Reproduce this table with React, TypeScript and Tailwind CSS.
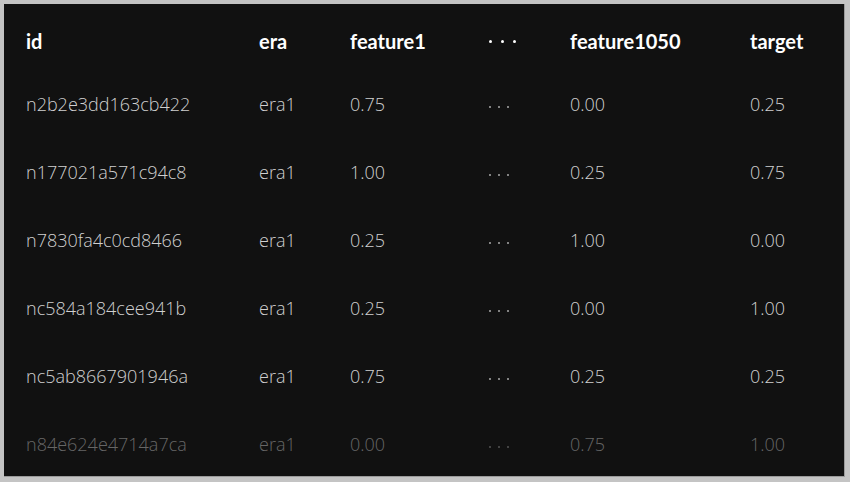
const rows = [
  { id: "n2b2e3dd163cb422", era: "era1", f1: "0.75", f1050: "0.00", target: "0.25" },
  { id: "n177021a571c94c8", era: "era1", f1: "1.00", f1050: "0.25", target: "0.75" },
  { id: "n7830fa4c0cd8466", era: "era1", f1: "0.25", f1050: "1.00", target: "0.00" },
  { id: "nc584a184cee941b", era: "era1", f1: "0.25", f1050: "0.00", target: "1.00" },
  { id: "nc5ab8667901946a", era: "era1", f1: "0.75", f1050: "0.25", target: "0.25" },
  { id: "n84e624e4714a7ca", era: "era1", f1: "0.00", f1050: "0.75", target: "1.00" },
];

const cols = "grid grid-cols-[233px_91px_138px_82px_180px_1fr] items-center";

export default function App() {
  return (
    <div className="w-[850px] h-[482px] bg-[#c4c4c4] pl-[4px] pt-[4px] pr-[5px] pb-[5px]">
      <div className="w-full h-full bg-[#111111] pl-[22px] pt-[8px] overflow-hidden border-r border-b border-[#9a9a9a]">
        {/* Header */}
        <div
          className={`${cols} h-[58px] text-white text-[20px] font-bold`}
          style={{ fontFamily: "Lato, 'Noto Sans', sans-serif" }}
        >
          <span>id</span>
          <span>era</span>
          <span>feature1</span>
          <span className="flex gap-[9px] pl-[1px]">
            <i className="w-[3px] h-[3px] bg-white rounded-full" />
            <i className="w-[3px] h-[3px] bg-white rounded-full" />
            <i className="w-[3px] h-[3px] bg-white rounded-full" />
          </span>
          <span>feature1050</span>
          <span>target</span>
        </div>

        {/* Rows */}
        {rows.map((r, i) => (
          <div
            key={r.id}
            className={`${cols} h-[68px] text-[18px] font-light ${
              i === rows.length - 1 ? "text-[#666666]" : "text-[#d0d0d0]"
            }`}
            style={{ fontFamily: "'Open Sans', 'Noto Sans', sans-serif" }}
          >
            <span>{r.id}</span>
            <span>{r.era}</span>
            <span>{r.f1}</span>
            <span className="flex gap-[7px] pl-[1px] pt-[5px]">
              <i className="w-[2px] h-[2px] bg-current rounded-full opacity-80" />
              <i className="w-[2px] h-[2px] bg-current rounded-full opacity-80" />
              <i className="w-[2px] h-[2px] bg-current rounded-full opacity-80" />
            </span>
            <span>{r.f1050}</span>
            <span>{r.target}</span>
          </div>
        ))}
      </div>
    </div>
  );
}
